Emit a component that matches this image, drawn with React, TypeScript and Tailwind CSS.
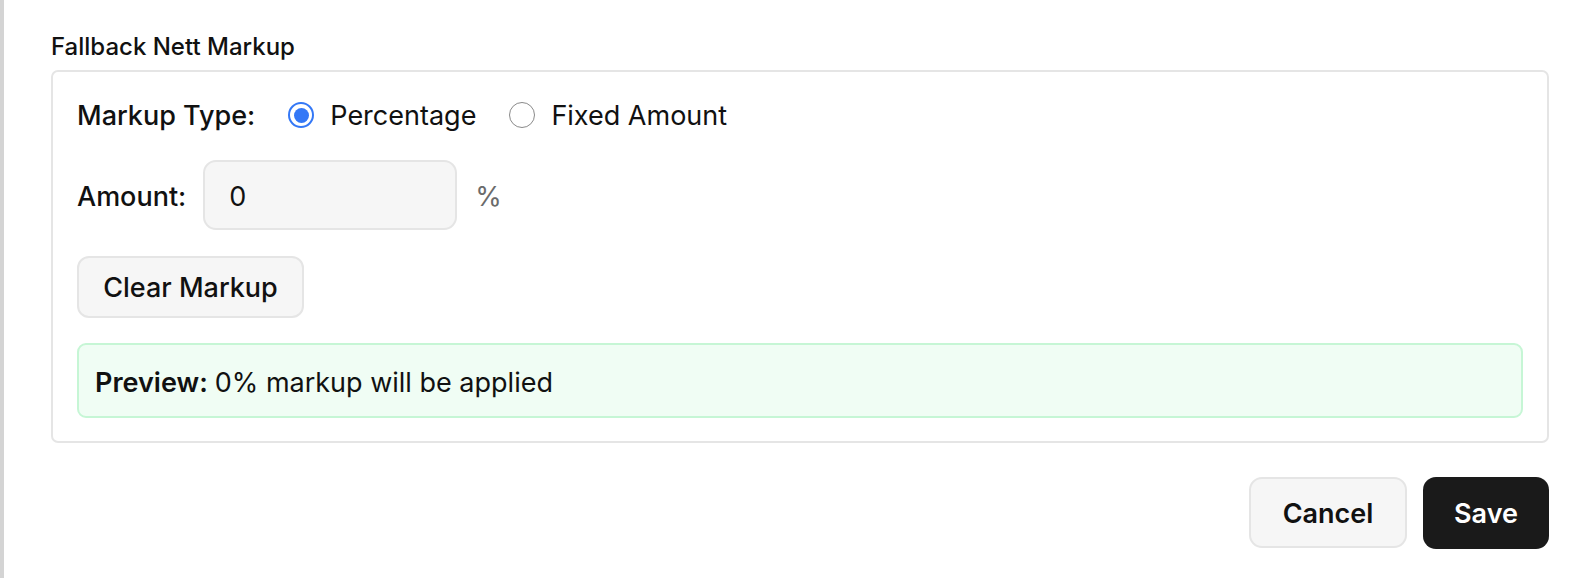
import React from "react";

function Radio({ checked }: { checked: boolean }) {
  return checked ? (
    <span className="flex h-[26px] w-[26px] items-center justify-center rounded-full border-[2.5px] border-[#3478f6] bg-white">
      <span className="h-[15px] w-[15px] rounded-full bg-[#3478f6]" />
    </span>
  ) : (
    <span className="h-[26px] w-[26px] rounded-full border-[1.5px] border-[#8a8a8a] bg-white" />
  );
}

export default function App() {
  return (
    <div
      className="flex h-[578px] w-[1580px] bg-white text-[#111]"
      style={{ fontFamily: "Inter, 'Noto Sans', sans-serif" }}
    >
      <div className="h-full w-[4px] bg-[#d4d4d4]" />
      <div className="flex flex-col pl-[47px] pt-[33px]">
        <div className="h-[37px] text-[24px] font-medium leading-[28px] text-[#111]">
          Fallback Nett Markup
        </div>
        <div className="flex w-[1498px] flex-col rounded-[7px] border-2 border-[#e5e5e5] px-[24px] pb-[23px] pt-[24px]">
          <div className="flex h-[38px] items-center text-[27px]">
            <span className="pt-[3px] font-medium">Markup Type:</span>
            <label className="ml-[33px] flex items-center">
              <Radio checked />
              <span className="ml-[16px] pt-[3px]">Percentage</span>
            </label>
            <label className="ml-[33px] flex items-center">
              <Radio checked={false} />
              <span className="ml-[16px] pt-[3px]">Fixed Amount</span>
            </label>
          </div>
          <div className="mt-[26px] flex h-[70px] items-center text-[27px]">
            <span className="pt-[4px] font-medium">Amount:</span>
            <div className="ml-[17px] flex h-[70px] w-[254px] items-center rounded-[13px] border-2 border-[#e5e5e5] bg-[#f6f6f6] px-[24px] pt-[4px]">
              0
            </div>
            <span className="ml-[18px] pt-[4px] text-[#6b6b6b]">%</span>
          </div>
          <div className="mt-[26px]">
            <button className="flex h-[62px] w-[227px] items-center justify-center rounded-[12px] border-2 border-[#e5e5e5] bg-[#f6f6f6] pt-[3px] text-[27px] font-medium text-[#111]">
              Clear Markup
            </button>
          </div>
          <div className="mt-[25px] flex h-[75px] items-center rounded-[9px] border-2 border-[#c6f6d5] bg-[#f0fdf4] px-[16px] pt-[5px] text-[27px]">
            <span className="font-semibold">Preview:</span>
            <span className="ml-[7px]">0% markup will be applied</span>
          </div>
        </div>
        <div className="mt-[34px] flex justify-end gap-[16px]">
          <button className="flex h-[71px] w-[158px] items-center justify-center rounded-[13px] border-2 border-[#e5e5e5] bg-[#f6f6f6] pt-[3px] text-[27px] font-semibold text-[#111]">
            Cancel
          </button>
          <button className="flex h-[72px] w-[126px] items-center justify-center rounded-[13px] bg-[#1a1a1a] pt-[3px] text-[27px] font-semibold text-white">
            Save
          </button>
        </div>
      </div>
    </div>
  );
}
